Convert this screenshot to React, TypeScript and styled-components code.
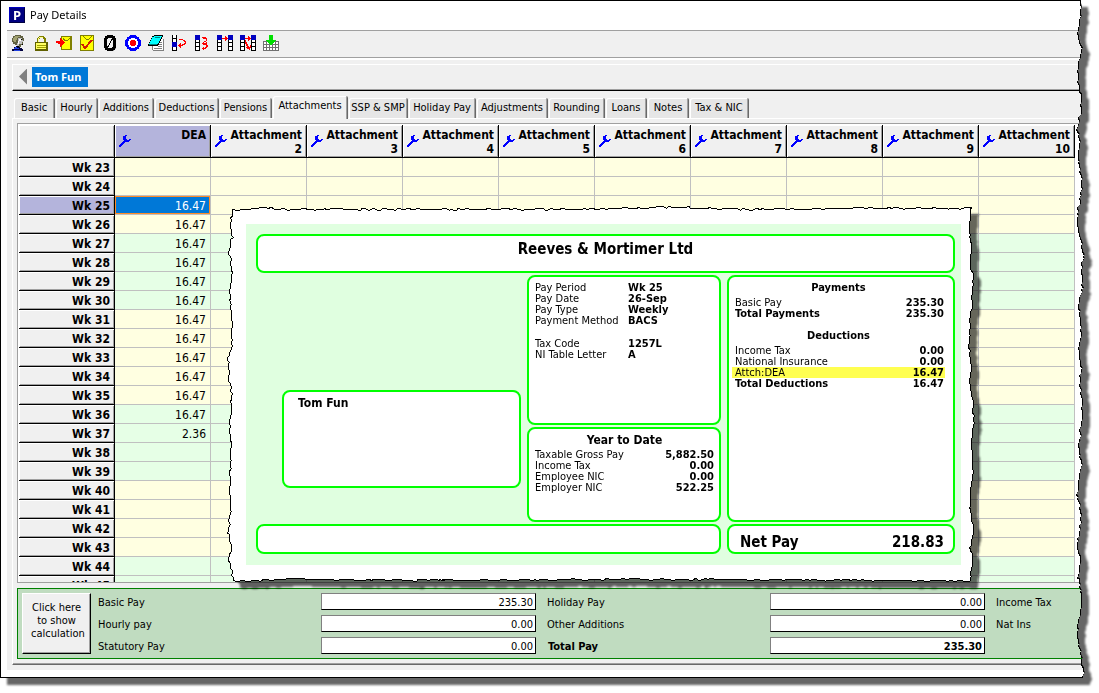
import React from 'react';
import styled, { createGlobalStyle, css } from 'styled-components';

const ui = '"DejaVu Sans Condensed", "DejaVu Sans", sans-serif';
const caption = '"Noto Sans", "Open Sans", sans-serif';

const GlobalStyle = createGlobalStyle`
  *, *::before, *::after { box-sizing: border-box; }
  body { margin: 0; background: #fff; color: #000; font: 11px/13px ${ui}; overflow: hidden; }
  button, input { font: inherit; color: inherit; border-radius: 0; margin: 0; }
`;

/* ---------- torn paper edges ---------- */

type Point = [number, number];

const makeRandom = (seed: number) => {
  let s = seed;
  return () => {
    s = (s * 16807) % 2147483647;
    return s / 2147483647;
  };
};

/* Walks along a coarse list of [position, depth] stops and roughens it. */
const roughen = (stops: Point[], seed: number, amount = 1): Point[] => {
  const rnd = makeRandom(seed);
  const out: Point[] = [];
  for (let i = 0; i < stops.length - 1; i++) {
    const [a, da] = stops[i];
    const [b, db] = stops[i + 1];
    let p = a;
    while (p < b) {
      const base = da + ((db - da) * (p - a)) / (b - a);
      out.push([p, Math.round(base + (rnd() - 0.5) * 2 * amount)]);
      p += 1 + Math.floor(rnd() * 4);
    }
  }
  out.push(stops[stops.length - 1]);
  return out;
};

const EDGE = 16;
const sideWave = [11, 10, 8, 12, 8, 7, 11, 10, 7, 10, 8, 11, 11, 8, 7, 11, 13, 11, 12, 8, 11, 10, 8, 11, 9, 12];
const sideStops: Point[] = Array.from({ length: 140 }, (_, i) => [i * 16, sideWave[i % sideWave.length]]);
const sidePoints = roughen(sideStops, 77, 1);
const windowClip = `polygon(0 0, ${sidePoints
  .map(([y, x]) => `calc(100% - ${EDGE - x}px) ${y}px`)
  .join(', ')}, 0 2300px)`;

const SLIP_W = 750;
const SLIP_H = 380;
const topPts = roughen([[7, 5], [40, 3], [70, 4], [200, 4], [360, 4], [450, 2], [520, 4], [640, 3], [746, 3]], 11, 1);
const rightPts = roughen(
  [[4, 745], [25, 743], [40, 745], [55, 744], [75, 747], [95, 746], [115, 744], [140, 743], [165, 745], [175, 743],
   [195, 746], [215, 748], [230, 745], [270, 747], [285, 744], [305, 744], [325, 747], [343, 744], [355, 747], [376, 744]],
  23, 1);
const bottomPts = roughen([[8, 376], [60, 374], [200, 375], [430, 374], [600, 375], [744, 376]], 31, 1).reverse();
const leftPts = roughen(
  [[5, 7], [20, 4], [32, 6], [47, 3], [57, 5], [70, 6], [85, 3], [100, 5], [140, 6], [155, 2], [173, 3], [190, 6],
   [220, 3], [240, 5], [275, 4], [290, 3], [300, 5], [328, 2], [340, 5], [355, 3], [376, 7]],
  43, 1).reverse();
const slipPoints = [
  ...topPts,
  ...rightPts.map(([y, x]) => [x, y]),
  ...bottomPts,
  ...leftPts.map(([y, x]) => [x, y]),
]
  .map((p) => p.join(','))
  .join(' ');

/* ---------- window ---------- */

const Page = styled.div`
  height: 100vh;
  min-height: 520px;
  padding: 0 12px 15px 0;
  filter: drop-shadow(7px 7px 1px rgba(0, 0, 0, 0.6));
`;

const Window = styled.main`
  position: relative;
  display: flex;
  flex-direction: column;
  height: 100%;
  overflow: hidden;
  background: #fff;
  border: 1px solid #000;
  border-right: 0;
  padding: 0 0 7px 6px;
  clip-path: ${windowClip};
`;

const WindowEdge = styled.svg`
  position: absolute;
  top: 0;
  right: 0;
  width: ${EDGE}px;
  height: 100%;
`;

const TitleBar = styled.header`
  display: flex;
  align-items: center;
  gap: 5px;
  height: 29px;
  padding: 0 0 2px 2px;
  font: 11px/16px ${caption};

  h1 { margin: 0; font: inherit; }
`;

const Logo = styled.span`
  width: 16px;
  height: 16px;
  background: #000080;
  border: 1px solid #0000c0;
  border-right-color: #000040;
  border-bottom-color: #000040;
  color: #fff;
  font: bold 13px/14px ${caption};
  text-align: center;
`;

const ToolBar = styled.nav`
  display: flex;
  height: 28px;
  background: #f0f0f0;
  border-top: 1px solid #a0a0a0;
  border-bottom: 1px solid #a0a0a0;
`;

const ToolButton = styled.button`
  display: flex;
  align-items: flex-start;
  width: 23px;
  padding: 4px 4px 0 3px;
  border: 0;
  background: transparent;
`;

const Client = styled.div`
  flex: 1;
  min-height: 0;
  display: flex;
  flex-direction: column;
  background: #f0f0f0;
  border-top: 2px solid #fff;
  padding: 4px 0 5px 5px;
`;

const EmployeeBar = styled.div`
  display: flex;
  align-items: center;
  gap: 5px;
  height: 27px;
  flex: none;
  padding: 0 0 2px 6px;
  border-top: 1px solid #fff;
  border-left: 1px solid #fff;
  border-bottom: 1px solid #000;
  box-shadow: inset 0 -1px #a0a0a0;
`;

const PreviousButton = styled.button`
  width: 8px;
  height: 16px;
  padding: 0;
  border: 0;
  background: #808080;
  clip-path: polygon(100% 0, 100% 100%, 0 50%);
`;

const EmployeeName = styled.button`
  height: 20px;
  padding: 0 7px 0 3px;
  border: 0;
  background: #0078d7;
  color: #fff;
  font: bold 11px/20px ${caption};
`;

/* ---------- tabs ---------- */

const Tabs = styled.div`
  display: flex;
  align-items: flex-end;
  gap: 1px;
  flex: none;
  height: 27px;
  padding-left: 2px;
`;

const Tab = styled.button<{ $width: number; $active?: boolean }>`
  width: ${(p) => p.$width}px;
  height: 20px;
  padding: 0 0 1px;
  border: 0;
  border-right: 1px solid #696969;
  border-radius: 2px 2px 0 0;
  background: #e6e6e6;
  box-shadow: inset 1px 1px #fff, inset -1px 0 #a0a0a0;
  line-height: 18px;
  white-space: nowrap;
  ${(p) =>
    p.$active &&
    css`
      height: 23px;
      margin-bottom: -1px;
      padding-bottom: 4px;
      background: #f0f0f0;
      position: relative;
      z-index: 1;
    `}
`;

const TabPanel = styled.section`
  flex: 1;
  min-height: 0;
  display: flex;
  flex-direction: column;
  gap: 5px;
  border-top: 1px solid #fff;
  border-left: 1px solid #fff;
  border-bottom: 1px solid #696969;
  box-shadow: inset 0 -1px #a0a0a0;
  padding: 4px 0 5px 4px;
`;

/* ---------- grid of weeks ---------- */

const GridView = styled.div`
  flex: 1;
  min-height: 0;
  overflow: hidden;
  background: #fff;
  border: 1px solid #a0a0a0;
  border-right: 0;
  padding: 1px 0 0 1px;
`;

const Grid = styled.table`
  width: 1056px;
  table-layout: fixed;
  border-collapse: separate;
  border-spacing: 0;
  font: 12px/14px ${ui};
`;

const HeadCell = styled.th<{ $selected?: boolean }>`
  position: relative;
  height: 33px;
  padding: 3px 4px 0 0;
  vertical-align: top;
  text-align: right;
  background: ${(p) => (p.$selected ? '#b4b4dc' : '#f0f0f0')};
  border-right: 1px solid #000;
  border-bottom: 1px solid #000;
  box-shadow: inset 1px 1px #fff, inset -1px -1px #a0a0a0;

  svg { position: absolute; left: 4px; top: 10px; }
`;

const WeekCell = styled.th<{ $selected?: boolean }>`
  height: 19px;
  padding: 2px 4px 0 0;
  text-align: right;
  line-height: 16px;
  background: ${(p) => (p.$selected ? '#b4b4dc' : '#f0f0f0')};
  border-right: 1px solid #000;
  border-bottom: 1px solid #000;
  box-shadow: inset 1px 1px #fff, inset -1px -1px #a0a0a0;
`;

const Cell = styled.td<{ $green: boolean; $selected?: boolean }>`
  height: 19px;
  padding: 2px 4px 0 0;
  text-align: right;
  line-height: 16px;
  background: ${(p) => (p.$green ? '#e6ffe6' : '#ffffe1')};
  border-right: 1px solid #c0c0c0;
  border-bottom: 1px solid #c0c0c0;
  ${(p) =>
    p.$selected &&
    css`
      background: #0078d7;
      color: #fff;
      box-shadow: inset 0 0 0 1px #ff8c28;
    `}
`;

/* ---------- totals ---------- */

const Totals = styled.form`
  flex: none;
  display: grid;
  grid-template-columns: 69px 230px 215px 234px 215px 1fr;
  grid-auto-rows: 17px;
  row-gap: 5px;
  height: 71px;
  padding: 4px 0 0 4px;
  background: #c0dcc0;
  border: 1px solid #008000;
  border-right: 0;
`;

const CalcButton = styled.button`
  grid-row: 1 / span 3;
  height: 61px;
  padding: 0 8px 6px;
  background: #f0f0f0;
  border: 1px solid #000;
  border-top-color: #fff;
  border-left-color: #fff;
  box-shadow: inset -1px -1px #a0a0a0;
`;

const FieldLabel = styled.label<{ $bold?: boolean }>`
  padding-left: ${(p) => (p.$bold ? 12 : 11)}px;
  line-height: 19px;
  font-weight: ${(p) => (p.$bold ? 'bold' : 'normal')};

  &:nth-of-type(3n + 1) { padding-left: 7px; }
`;

const Field = styled.input<{ $bold?: boolean }>`
  width: 100%;
  height: 17px;
  padding: 2px 2px 0;
  text-align: right;
  background: #fff;
  border: 1px solid #000;
  border-top-color: #808080;
  border-left-color: #808080;
  font-weight: ${(p) => (p.$bold ? 'bold' : 'normal')};
`;

/* ---------- payslip ---------- */

const Slip = styled.aside`
  position: absolute;
  left: 225px;
  top: 204px;
  width: ${SLIP_W}px;
  height: ${SLIP_H}px;
  padding: 19px 14px 16px 20px;
  filter: drop-shadow(7px 7px 1px rgba(0, 0, 0, 0.6));
`;

const SlipPaper = styled.svg`
  position: absolute;
  inset: 0;
`;

const SlipBody = styled.div`
  position: relative;
  display: grid;
  grid-template-columns: 1fr 194px 228px;
  grid-template-rows: 39px 150px 95px 30px;
  column-gap: 6px;
  row-gap: 2px;
  width: 715px;
  height: 341px;
  padding: 10px 6px 0 10px;
  background: #e0ffe0;
`;

const Box = styled.section`
  background: #fff;
  border: 2px solid #00ff00;
  border-radius: 8px;
`;

const CompanyBox = styled(Box)`
  grid-column: 1 / -1;
  text-align: center;
  font: bold 15px/27px ${ui};
`;

const AddressArea = styled.div`
  grid-row: 2 / span 2;
  padding: 115px 0 0 26px;
`;

const AddressBox = styled(Box)`
  height: 98px;
  padding: 3px 14px;
  font: bold 12px/16px ${ui};
`;

const InfoBox = styled(Box)`
  padding: 5px 5px 0 6px;
`;

const PayBox = styled(Box)`
  grid-column: 3;
  grid-row: 2 / span 2;
  padding: 4px 8px 0 3px;
`;

const NoteBox = styled(Box)`
  grid-column: 1 / span 2;
`;

const NetBox = styled(Box)`
  display: flex;
  justify-content: space-between;
  padding: 3px 9px 0 11px;
  font: bold 15px/26px ${ui};
`;

const SlipHeading = styled.h2<{ $large?: boolean; $top?: number }>`
  margin: ${(p) => p.$top ?? 0}px 0 0;
  text-align: center;
  font: bold ${(p) => (p.$large ? '12px/13px' : '11px/13px')} ${ui};
`;

const SlipTable = styled.table<{ $top?: number; $inset?: number }>`
  width: 100%;
  margin-top: ${(p) => p.$top ?? 0}px;
  border-collapse: collapse;
  font: 11px/11px ${ui};
  white-space: nowrap;

  th { padding: 0 0 0 ${(p) => p.$inset ?? 0}px; text-align: left; font-weight: normal; }
  td { padding: 0 ${(p) => (p.$inset ? 1 : 0)}px 0 0; text-align: right; font-weight: bold; }
`;

const InfoTable = styled(SlipTable)`
  th { width: 93px; }
  td { text-align: left; }
`;

const SlipRow = styled.tr<{ $mark?: boolean; $total?: boolean; $space?: boolean }>`
  background: ${(p) => (p.$mark ? '#ffff50' : 'transparent')};
  ${(p) => p.$total && css`&& th { font-weight: bold; }`}
  ${(p) => p.$space && css`&& th, && td { padding-top: 12px; }`}
`;

/* ---------- icons ---------- */

const Icon = ({ size = 16, children }: { size?: number; children: React.ReactNode }) => (
  <svg width={size} height={size} viewBox={`0 0 ${size} ${size}`} shapeRendering="crispEdges" aria-hidden="true">
    {children}
  </svg>
);

const Wrench = () => (
  <Icon size={12}>
    <path
      fill="#0000ff"
      d="M6 0h2v1h-1v3h1v1h2v-1h2v1h-1v1h-1v1h-4v1h-1v1h-1v1h-1v1h-1v1h-2v-2h1v-1h1v-1h1v-1h1v-1h1v-1h-1v-4h1z"
    />
  </Icon>
);

const Ladder = ({ x, fill = -1 }: { x: number; fill?: number }) => (
  <g>
    <path fill="#fff" d={`M${x} 0h5v15h-5z`} />
    <path fill="#000" d={`M${x} 0h1v16h-1zM${x + 4} 0h1v16h-1zM${x} 3h5v1h-5zM${x} 7h5v1h-5zM${x} 11h5v1h-5zM${x} 15h5v1h-5z`} />
    {fill >= 0 && <path fill="#0000c0" d={`M${x} ${fill}h5v5h-5z`} />}
  </g>
);

const icons: { name: string; art: React.ReactNode }[] = [
  {
    name: 'Employee',
    art: (
      <>
        <path fill="#606040" d="M5 0h6v1h2v2h1v3h-1v4h-2v2h-4v-2h-2v-1h-2v-2h-1v-4h1v-2h2z" />
        <path fill="#a0a070" d="M5 1h5v1h-2v1h-1v2h-1v2h-2v-1h-1v-3h1v-1h1z" />
        <path fill="#c0c0c0" d="M8 3h4v2h1v2h-1v2h-3v2h-2v-3h1z" />
        <path fill="#fff" d="M9 4h2v2h-2zM8 6h1v3h-1z" />
        <path fill="#000" d="M11 4h1v1h-1zM7 11h2v1h-2zM12 9h1v1h-1z" />
        <path fill="#000040" d="M4 12h2v-1h1v1h3v1h2v1h1v2h-11v-2h2z" />
        <path fill="#2040e0" d="M5 12h2v1h2v1h-5v-1h1zM4 15h6v1h-6z" />
      </>
    ),
  },
  {
    name: 'Lock',
    art: (
      <>
        <path fill="#808000" d="M6 1h5v1h1v1h1v5h-2v-4h-1v-1h-3v1h-1v4h-2v-5h1v-1h1z" />
        <path fill="#606000" d="M2 7h13v9h-13z" />
        <path fill="#ffff60" d="M3 8h10v6h-10z" />
        <path fill="#a0a000" d="M4 10h9v1h-9zM4 12h9v1h-9z" />
        <path fill="#ffff90" d="M6 2h4v1h-4zM5 3h1v4h-1z" />
      </>
    ),
  },
  {
    name: 'Post in',
    art: (
      <>
        <path fill="#808000" d="M5 1h11v14h-11z" />
        <path fill="#ffff00" d="M6 2h8v12h-8z" />
        <path fill="#808000" d="M7 3h1v1h1v1h3v-1h1v-1h1v1h-1v1h-1v1h-4v-1h-1z" />
        <path fill="#ff0000" d="M0 6h4v-3h1v1h1v1h1v1h1v1h1v1h-1v1h-1v1h-1v1h-1v1h-1v-3h-2v-1h-2z" />
      </>
    ),
  },
  {
    name: 'Approve',
    art: (
      <>
        <path fill="#808000" d="M1 0h14v16h-14z" />
        <path fill="#ffff00" d="M2 1h12v14h-12z" />
        <path fill="none" stroke="#808000" d="M4 1l3 3h3l3-3" />
        <path fill="none" stroke="#d02000" strokeWidth="2" d="M3 9l3 4l7-8" />
      </>
    ),
  },
  {
    name: 'Zero',
    art: (
      <>
        <path fill="#909090" d="M7 1h5v2h2v11h-2v2h-6z" />
        <path fill="#000" d="M5 0h6v1h2v2h1v10h-1v2h-2v1h-6v-1h-2v-2h-1v-10h1v-2h2z" />
        <path fill="#f0f0f0" d="M6 3h4v1h-1v2h-1v2h-1v2h-1v1h-1v-7h1zM10 5h1v7h-1v1h-4v-1h1v-2h1v-2h1v-2h1z" />
      </>
    ),
  },
  {
    name: 'Target',
    art: (
      <>
        <circle cx="8" cy="8" r="8" fill="#0000ff" />
        <circle cx="8" cy="8" r="5" fill="#fff" />
        <circle cx="8" cy="8" r="3" fill="#ff0000" />
      </>
    ),
  },
  {
    name: 'Notes',
    art: (
      <>
        <path fill="#fff" d="M5 4h11v12h-11z" />
        <path fill="#808080" d="M15 4h1v11h-1zM5 15h11v1h-11zM4 11h1v4h-1zM12 7h2v1h-2zM11 9h3v1h-3zM6 13h8v1h-8zM10 11h4v1h-4z" />
        <path fill="#000" d="M6 0h9v2h-1v2h-1v2h-1v2h-1v2h-1v1h-10v-2h1v-2h1v-2h1v-2h1v-2h2z" />
        <path fill="#00ffff" d="M6 1h8v1h-1v2h-1v2h-1v2h-1v1h-9v-1h1v-2h1v-2h1v-2h2z" />
        <path fill="#008080" d="M1 9h8v1h-8zM7 2h5v1h-5z" />
      </>
    ),
  },
  {
    name: 'Copy down one',
    art: (
      <>
        <Ladder x={1} fill={7} />
        <path fill="#ff0000" d="M8 4h4v1h2v1h1v3h-1v1h-2v1h-2v2h-1v-1h-1v-1h-1v-1h1v-1h1v-1h1v2h1v-1h2v-1h1v-1h-1v-1h-1v-1h-4z" />
      </>
    ),
  },
  {
    name: 'Copy down all',
    art: (
      <>
        <Ladder x={1} fill={0} />
        <path fill="#ff0000" d="M8 2h4v1h1v3h-1v1h1v3h1v2h-1v1h-1v1h-2v1h-1v-1h-1v-1h1v-1h1v1h1v-1h1v-2h-3v-1h-1v-1h1v-1h1v1h2v-1h-2v-1h2v-2h-3z" />
      </>
    ),
  },
  {
    name: 'Copy across',
    art: (
      <>
        <Ladder x={0} fill={0} />
        <Ladder x={11} fill={0} />
        <path fill="#ff0000" d="M5 3h3v-2h1v1h1v1h1v1h-1v1h-1v1h-1v-2h-3z" />
      </>
    ),
  },
  {
    name: 'Copy across and down',
    art: (
      <>
        <Ladder x={0} fill={0} />
        <Ladder x={11} fill={0} />
        <path fill="#ff0000" d="M5 3h3v-2h1v1h1v1h1v1h-1v1h-1v1h-1v-2h-3zM5 5h1v2h1v2h1v2h1v1h1v-2h1v3h-1v2h-1v-1h-2v-1h-1v-1h1v-1h-1v-2h-1z" />
      </>
    ),
  },
  {
    name: 'Import',
    art: (
      <>
        <path fill="#fff" d="M0 6h16v10h-16z" />
        <path stroke="#707070" d="M0 6.500h16M0 9.500h16M0 12.500h16M0 15.500h16M0.500 7v9M3.500 7v9M6.500 7v9M9.500 7v9M12.500 7v9M15.500 7v9" />
        <path fill="#00e000" d="M6 0h4v5h3v1h-1v1h-1v1h-1v1h-1v1h-2v-1h-1v-1h-1v-1h-1v-1h-1v-1h3z" />
      </>
    ),
  },
];

/* ---------- data ---------- */

const tabs: [string, number][] = [
  ['Basic', 41],
  ['Hourly', 42],
  ['Additions', 55],
  ['Deductions', 64],
  ['Pensions', 52],
  ['Attachments', 75],
  ['SSP & SMP', 59],
  ['Holiday Pay', 67],
  ['Adjustments', 71],
  ['Rounding', 56],
  ['Loans', 41],
  ['Notes', 41],
  ['Tax & NIC', 59],
];

const columns = ['DEA', ...Array.from({ length: 9 }, (_, i) => `Attachment ${i + 2}`)];

const weeks = Array.from({ length: 23 }, (_, i) => {
  const no = 23 + i;
  return {
    no,
    green: (no >= 27 && no <= 30) || (no >= 36 && no <= 39) || no >= 44,
    dea: no >= 25 && no <= 36 ? '16.47' : no === 37 ? '2.36' : '',
  };
});

const fields: { label: string; value?: string; bold?: boolean }[] = [
  { label: 'Basic Pay', value: '235.30' },
  { label: 'Holiday Pay', value: '0.00' },
  { label: 'Income Tax' },
  { label: 'Hourly pay', value: '0.00' },
  { label: 'Other Additions', value: '0.00' },
  { label: 'Nat Ins' },
  { label: 'Statutory Pay', value: '0.00' },
  { label: 'Total Pay', value: '235.30', bold: true },
];

type Line = { label: string; value: string; mark?: boolean; total?: boolean; space?: boolean };

const info: Line[] = [
  { label: 'Pay Period', value: 'Wk 25' },
  { label: 'Pay Date', value: '26-Sep' },
  { label: 'Pay Type', value: 'Weekly' },
  { label: 'Payment Method', value: 'BACS' },
  { label: 'Tax Code', value: '1257L', space: true },
  { label: 'NI Table Letter', value: 'A' },
];

const yearToDate: Line[] = [
  { label: 'Taxable Gross Pay', value: '5,882.50' },
  { label: 'Income Tax', value: '0.00' },
  { label: 'Employee NIC', value: '0.00' },
  { label: 'Employer NIC', value: '522.25' },
];

const payments: Line[] = [
  { label: 'Basic Pay', value: '235.30' },
  { label: 'Total Payments', value: '235.30', total: true },
];

const deductions: Line[] = [
  { label: 'Income Tax', value: '0.00' },
  { label: 'National Insurance', value: '0.00' },
  { label: 'Attch:DEA', value: '16.47', mark: true },
  { label: 'Total Deductions', value: '16.47', total: true },
];

const Lines = ({ rows }: { rows: Line[] }) => (
  <tbody>
    {rows.map((r) => (
      <SlipRow key={r.label} $mark={r.mark} $total={r.total} $space={r.space}>
        <th scope="row">{r.label}</th>
        <td>{r.value}</td>
      </SlipRow>
    ))}
  </tbody>
);

const Payslip = () => (
  <Slip aria-label="Payslip">
    <SlipPaper width={SLIP_W} height={SLIP_H} aria-hidden="true">
      <polygon points={slipPoints} fill="#fff" stroke="#000" shapeRendering="crispEdges" />
    </SlipPaper>
    <SlipBody>
      <CompanyBox>Reeves &amp; Mortimer Ltd</CompanyBox>
      <AddressArea>
        <AddressBox>Tom Fun</AddressBox>
      </AddressArea>
      <InfoBox>
        <InfoTable>
          <Lines rows={info} />
        </InfoTable>
      </InfoBox>
      <PayBox>
        <SlipHeading>Payments</SlipHeading>
        <SlipTable $top={3} $inset={3}>
          <Lines rows={payments} />
        </SlipTable>
        <SlipHeading $top={10}>Deductions</SlipHeading>
        <SlipTable $top={3} $inset={3}>
          <Lines rows={deductions} />
        </SlipTable>
      </PayBox>
      <InfoBox>
        <SlipHeading $large>Year to Date</SlipHeading>
        <SlipTable $top={2}>
          <Lines rows={yearToDate} />
        </SlipTable>
      </InfoBox>
      <NoteBox />
      <NetBox>
        <span>Net Pay</span>
        <span>218.83</span>
      </NetBox>
    </SlipBody>
  </Slip>
);

const App = () => (
  <>
    <GlobalStyle />
    <Page>
      <Window>
        <TitleBar>
          <Logo aria-hidden="true">P</Logo>
          <h1>Pay Details</h1>
        </TitleBar>
        <ToolBar>
          {icons.map((i) => (
            <ToolButton key={i.name} type="button" aria-label={i.name}>
              <Icon>{i.art}</Icon>
            </ToolButton>
          ))}
        </ToolBar>
        <Client>
          <EmployeeBar>
            <PreviousButton type="button" aria-label="Previous employee" />
            <EmployeeName type="button">Tom Fun</EmployeeName>
          </EmployeeBar>
          <Tabs role="tablist">
            {tabs.map(([name, width]) => (
              <Tab
                key={name}
                type="button"
                role="tab"
                aria-selected={name === 'Attachments'}
                $width={width}
                $active={name === 'Attachments'}
              >
                {name}
              </Tab>
            ))}
          </Tabs>
          <TabPanel>
            <GridView>
              <Grid>
                <thead>
                  <tr>
                    <HeadCell as="td" />
                    {columns.map((c) => (
                      <HeadCell key={c} scope="col" $selected={c === 'DEA'}>
                        <Wrench />
                        {c.replace(/ (\d+)$/, '')}
                        {c !== 'DEA' && (
                          <>
                            <br />
                            {c.split(' ')[1]}
                          </>
                        )}
                      </HeadCell>
                    ))}
                  </tr>
                </thead>
                <tbody>
                  {weeks.map((w) => (
                    <tr key={w.no}>
                      <WeekCell scope="row" $selected={w.no === 25}>
                        Wk {w.no}
                      </WeekCell>
                      {columns.map((c) => (
                        <Cell key={c} $green={w.green} $selected={w.no === 25 && c === 'DEA'}>
                          {c === 'DEA' && w.dea}
                        </Cell>
                      ))}
                    </tr>
                  ))}
                </tbody>
              </Grid>
            </GridView>
            <Totals>
              <CalcButton type="button">Click here to show calculation</CalcButton>
              {fields.map((f) => (
                <React.Fragment key={f.label}>
                  <FieldLabel htmlFor={f.value && f.label.replace(/ /g, '-')} $bold={f.bold}>
                    {f.label}
                  </FieldLabel>
                  {f.value && (
                    <Field id={f.label.replace(/ /g, '-')} defaultValue={f.value} $bold={f.bold} />
                  )}
                </React.Fragment>
              ))}
            </Totals>
          </TabPanel>
        </Client>
        <WindowEdge aria-hidden="true">
          <polyline
            points={sidePoints.map(([y, x]) => `${x},${y}`).join(' ')}
            fill="none"
            stroke="#000"
            strokeWidth="2"
            shapeRendering="crispEdges"
          />
        </WindowEdge>
        <Payslip />
      </Window>
    </Page>
  </>
);

export default App;
